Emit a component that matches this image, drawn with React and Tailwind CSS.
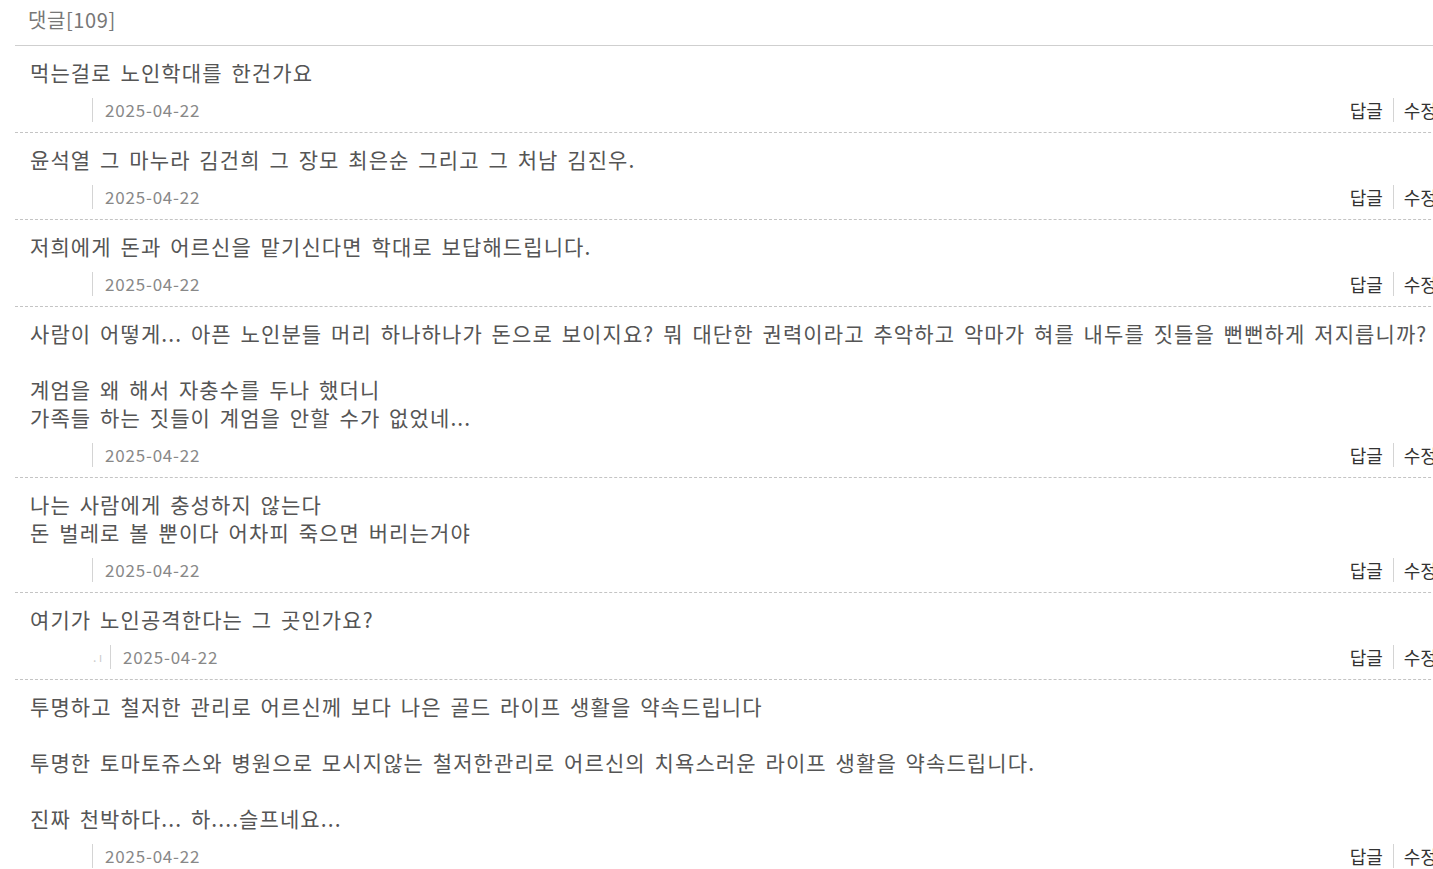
import React from 'react';

const comments = [
  { text: '먹는걸로 노인학대를 한건가요', name: '', nameWidth: 'w-[62px]' },
  { text: '윤석열 그 마누라 김건희 그 장모 최은순 그리고 그 처남 김진우.', name: '', nameWidth: 'w-[62px]' },
  { text: '저희에게 돈과 어르신을 맡기신다면 학대로 보답해드립니다.', name: '', nameWidth: 'w-[62px]' },
  {
    text:
      '사람이 어떻게... 아픈 노인분들 머리 하나하나가 돈으로 보이지요? 뭐 대단한 권력이라고 추악하고 악마가 혀를 내두를 짓들을 뻔뻔하게 저지릅니까?\n\n계엄을 왜 해서 자충수를 두나 했더니\n가족들 하는 짓들이 계엄을 안할 수가 없었네...',
    name: '',
    nameWidth: 'w-[62px]',
  },
  { text: '나는 사람에게 충성하지 않는다\n돈 벌레로 볼 뿐이다 어차피 죽으면 버리는거야', name: '', nameWidth: 'w-[62px]' },
  { text: '여기가 노인공격한다는 그 곳인가요?', name: '. ı', nameWidth: 'w-[80px]' },
  {
    text:
      '투명하고 철저한 관리로 어르신께 보다 나은 골드 라이프 생활을 약속드립니다\n\n투명한 토마토쥬스와 병원으로 모시지않는 철저한관리로 어르신의 치욕스러운 라이프 생활을 약속드립니다.\n\n진짜 천박하다... 하....슬프네요...',
    name: '',
    nameWidth: 'w-[62px]',
  },
];

const CommentRow = ({ text, name, nameWidth }) => (
  <div className="border-b border-dashed border-[#c4c4c4] pl-[15px] pt-[12px] pb-[8px]">
    <p className="text-[21px] leading-[28px] tracking-[1.1px] [word-spacing:3px] text-[#555] whitespace-pre-line">
      {text}
    </p>
    <div className="mt-[10px] h-7 flex items-center justify-between">
      <div className="flex items-center">
        <span className={`${nameWidth} text-right pr-2 text-[12px] text-[#ccc]`}>{name}</span>
        <span className="h-6 w-px bg-[#d4d4d4]" />
        <span className="pl-3 text-[17px] tracking-[0.8px] text-[#888]">2025-04-22</span>
      </div>
      <div className="flex items-center text-[18px] text-[#333]">
        <button className="px-[10px]">답글</button>
        <span className="h-6 w-px bg-[#d4d4d4]" />
        <button className="px-[10px]">수정</button>
        <span className="h-6 w-px bg-[#d4d4d4]" />
        <button className="px-[10px]">삭제</button>
      </div>
    </div>
  </div>
);

export default function App() {
  return (
    <div className="w-full min-h-screen overflow-hidden bg-white font-['Noto_Sans_CJK_KR','Noto_Sans',sans-serif]">
      <div className="ml-[15px] w-[1486px]">
        <div className="h-[46px] pl-[13px] pt-[6px] border-b border-[#cfcfcf] text-[20px] leading-[28px] tracking-[0.6px] text-[#777]">
          댓글[109]
        </div>
        {comments.map((c, i) => (
          <CommentRow key={i} {...c} />
        ))}
      </div>
    </div>
  );
}
